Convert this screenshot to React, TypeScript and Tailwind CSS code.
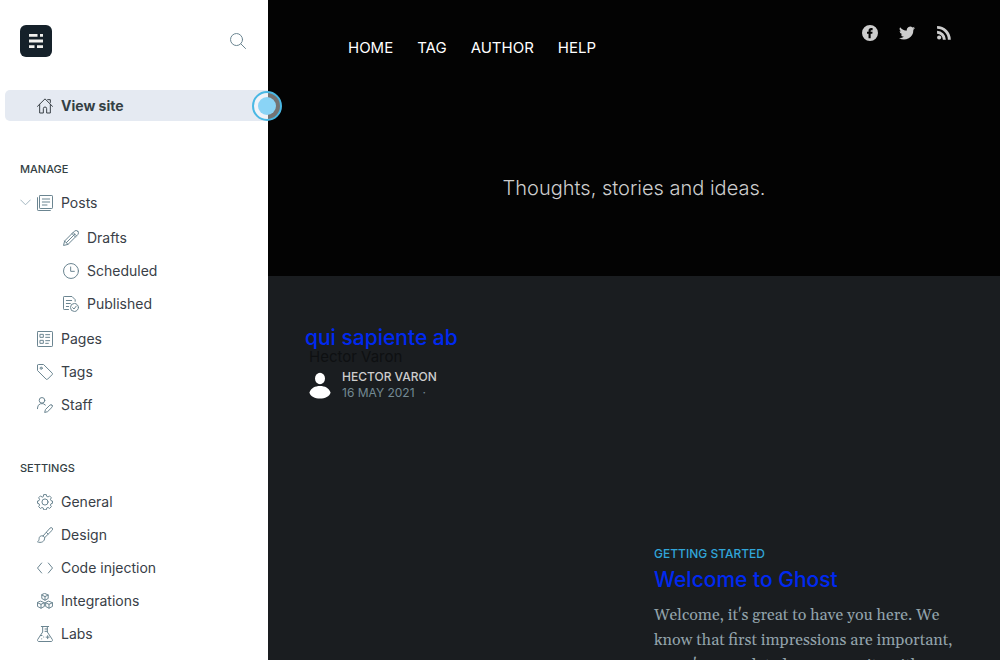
import type { ReactNode } from "react";

function Icon({ children, className = "size-4 text-[#6b8591]" }: { children: ReactNode; className?: string }) {
  return (
    <svg
      viewBox="0 0 24 24"
      fill="none"
      stroke="currentColor"
      strokeWidth="1.5"
      strokeLinecap="round"
      strokeLinejoin="round"
      aria-hidden="true"
      className={`shrink-0 ${className}`}
    >
      {children}
    </svg>
  );
}

const icons = {
  house: (
    <>
      <path d="M.75 12.5 12 1.3l11.25 11.200" />
      <path d="M4 9.500v13H9.500v-6.500a2.500 2.500 0 0 1 5 0v6.500H20V9.500" />
      <path d="M16 2.500h4v4.200" />
    </>
  ),
  posts: (
    <>
      <rect x="3.75" y=".75" width="19.5" height="19.5" rx="1" />
      <path d="M.75 4v18.25a1 1 0 0 0 1 1H20M8 6h11M8 10.5h11M8 15h7" />
    </>
  ),
  pencil: (
    <>
      <path d="M22.2 1.8a3.6 3.6 0 0 0-5.1 0L2.4 16.5.8 23.2l6.7-1.6L22.2 6.9a3.6 3.6 0 0 0 0-5.1Z" />
      <path d="m15.2 3.7 5.1 5.1M2.4 16.5l5.1 5.1M17.7 6.3 5 19M13.5 5.4l5.1 5.1" />
    </>
  ),
  clock: (
    <>
      <circle cx="12" cy="12" r="11.2" />
      <path d="M11.5 6v6.5H17" />
    </>
  ),
  published: (
    <>
      <path d="M8.25 20.25h-6.5a1 1 0 0 1-1-1V1.75a1 1 0 0 1 1-1H13.5l4.75 4.75V8M5 6.75h8M5 11.25h6M5 15.75h3.5" />
      <circle cx="17.2" cy="17.2" r="6" />
      <path d="m14.5 17.5 2 2 3.4-4.4" />
    </>
  ),
  pages: (
    <>
      <rect x=".75" y=".75" width="22.5" height="22.5" rx="1" />
      <path d="M5 5h4.5v4.5H5zM5 14h4.5v4.5H5zM13 5.5h6M13 9.5h6M13 14.5h6M13 18.5h4" />
    </>
  ),
  tag: (
    <>
      <path d="M.75 2v7.8l13 13a1.5 1.5 0 0 0 2.1 0l7-7a1.5 1.5 0 0 0 0-2.1L9.8.75H2A1.25 1.25 0 0 0 .75 2Z" />
      <circle cx="6.3" cy="6.3" r="1.6" />
    </>
  ),
  staff: (
    <>
      <circle cx="7.5" cy="5" r="4.2" />
      <path d="M.75 17.5v-1a6.75 6.75 0 0 1 11.8-4.5" />
      <path d="M22.5 12.2a2.3 2.3 0 0 0-3.2 0l-6.6 6.6-1.2 4.4 4.4-1.2 6.6-6.6a2.3 2.3 0 0 0 0-3.2Z" />
    </>
  ),
  gear: (
    <>
      <path d="M9.500 3.500 10 .9h4l.5 2.600 2.100.9 2.200-1.500 2.800 2.800-1.500 2.200.9 2.100 2.200.5v3.500l-2.200.6-.9 2.100 1.500 2.200-2.800 2.800-2.200-1.500-2.100.9-.5 2.600h-4l-.5-2.600-2.100-.9-2.200 1.500-2.800-2.800 1.500-2.200-.9-2.100L.8 14v-3.500L3 10l.9-2.100-1.500-2.200 2.800-2.800 2.200 1.500Z" />
      <circle cx="12" cy="12" r="4.6" />
    </>
  ),
  brush: (
    <>
      <path d="M9 13.500 19.600 1.600a2.200 2.200 0 0 1 3.200 3.200L11.500 16" />
      <path d="M8.400 13.200c-3-.5-5.200 1.200-5.200 4.200 0 2.200-.9 3.700-2.400 4.800 4.700 2.200 11.200.4 10.700-6.200Z" />
      <path d="m14 8 2.500 2.500" />
    </>
  ),
  code: <path d="M7 4.5.75 12 7 19.5M17 4.5l6.25 7.5L17 19.5" />,
  cubes: (
    <>
      <path d="m12 .8 4.8 2.2v5.2L12 10.8 7.2 8.2V3ZM7.2 3 12 5.4 16.800 3M12 5.400v5.400" />
      <path d="m6 12.4 5 2.2v5.6l-5 2.6-5.2-2.6v-5.6ZM.8 14.6 6 17l5-2.400M6 17v5.800" />
      <path d="m18 12.4 5.2 2.2v5.6L18 22.800l-5-2.600v-5.600ZM13 14.600l5 2.400 5.200-2.400M18 17v5.800" />
    </>
  ),
  flask: (
    <>
      <path d="M6.5.75h11M8.5.75V9L1 20.3c-.8 1.4 0 2.95 1.6 2.95h18.8c1.6 0 2.4-1.55 1.6-2.95L15.5 9V.75M12 4.5h3.5M12 8h3.5M5 14.3h2.500" />
      <path d="M16 14.500v4.500M13.700 16.700h4.600M7 19.300h.1M10 16.500h.1" />
    </>
  ),
};

function NavItem({ icon, label, nested = false }: { icon: ReactNode; label: string; nested?: boolean }) {
  return (
    <li>
      <a
        href="#"
        className={`flex h-[33px] items-center gap-2 text-sm text-[#394047] ${nested ? "pl-[63px]" : "pl-[37px]"}`}
      >
        <Icon>{icon}</Icon>
        {label}
      </a>
    </li>
  );
}

function Sidebar() {
  return (
    <aside className="relative w-[268px] shrink-0 bg-white">
      <div className="flex items-center justify-between pt-[25px] pr-[22px] pl-5">
        <a href="#" aria-label="Dashboard" className="grid size-8 place-items-center rounded-md bg-[#15212a]">
          <svg viewBox="0 0 14 14" className="size-3.5" aria-hidden="true">
            <path fill="#f1f1ee" d="M0 0h8.500v2.800H0zM11 0h3v2.800h-3zM0 5.600h14v2.800H0zM0 11.200h5.500V14H0zM8 11.200h6V14H8z" />
          </svg>
        </a>
        <button type="button" aria-label="Search">
          <Icon>
            <circle cx="9.8" cy="9.8" r="9" />
            <path d="m16.3 16.3 7 7" />
          </Icon>
        </button>
      </div>

      <a
        href="#"
        className="mt-[33px] ml-[5px] flex h-[31px] items-center gap-2 rounded-l-[5px] bg-[#e5eaf2] pl-8 text-sm font-bold text-[#343f44]"
      >
        <Icon className="size-4 text-[#394047]">{icons.house}</Icon>
        View site
      </a>
      <span
        aria-hidden="true"
        className="absolute top-[91px] -right-3.5 grid size-[30px] place-items-center rounded-full border-2 border-[#4ab8e4] bg-white/45"
      >
        <span className="size-[18px] rounded-full bg-[#8ad4f6]" />
      </span>

      <nav>
        <h2 className="mt-10 pl-5 text-[11px] leading-4 font-medium text-[#343f44] uppercase">Manage</h2>
        <ul className="mt-[9px]">
          <li>
            <div className="flex h-[33px] items-center pl-5 text-sm text-[#394047]">
              <button type="button" aria-label="Collapse posts" className="mr-1.5">
                <Icon className="size-[11px] text-[#9bb0bb]">
                  <path strokeWidth="2" d="m1.5 6.5 10.5 10.5L22.5 6.5" />
                </Icon>
              </button>
              <a href="#" className="flex items-center gap-2">
                <Icon>{icons.posts}</Icon>
                Posts
              </a>
            </div>
            <ul className="py-0.5">
              <NavItem nested icon={icons.pencil} label="Drafts" />
              <NavItem nested icon={icons.clock} label="Scheduled" />
              <NavItem nested icon={icons.published} label="Published" />
            </ul>
          </li>
          <NavItem icon={icons.pages} label="Pages" />
          <NavItem icon={icons.tag} label="Tags" />
          <NavItem icon={icons.staff} label="Staff" />
        </ul>

        <h2 className="mt-[39px] pl-5 text-[11px] leading-4 font-medium text-[#343f44] uppercase">Settings</h2>
        <ul className="mt-[9px]">
          <NavItem icon={icons.gear} label="General" />
          <NavItem icon={icons.brush} label="Design" />
          <NavItem icon={icons.code} label="Code injection" />
          <NavItem icon={icons.cubes} label="Integrations" />
          <NavItem icon={icons.flask} label="Labs" />
        </ul>
      </nav>
    </aside>
  );
}

function SiteHeader() {
  return (
    <header className="h-[276px] bg-[#030303]">
      <div className="flex justify-between pr-12 pl-20">
        <nav className="flex gap-6 pt-9 text-[15px] leading-6 text-white uppercase">
          <a href="#">Home</a>
          <a href="#">Tag</a>
          <a href="#">Author</a>
          <a href="#">Help</a>
        </nav>
        <div className="flex gap-[21px] pt-[25px] text-[#cdcdcd]">
          <a href="#" aria-label="Facebook">
            <svg viewBox="0 0 32 32" className="size-4" fill="currentColor" aria-hidden="true">
              <path d="M16 0a16 16 0 1 0 0 32 16 16 0 0 0 0-32Zm5.2 10.3h-2.4c-.9 0-1.5.5-1.5 1.4v2h3.8l-.5 3.7h-3.3v8.9h-4.2v-8.9H10v-3.7h3.1v-2.9c0-3.2 2.1-5 5-5h3.1v4.5Z" />
            </svg>
          </a>
          <a href="#" aria-label="Twitter">
            <svg viewBox="0 0 24 24" className="size-4" fill="currentColor" aria-hidden="true">
              <path d="M24 4.6a10 10 0 0 1-2.8.8 5 5 0 0 0 2.2-2.7 10 10 0 0 1-3.1 1.2 4.9 4.9 0 0 0-8.4 4.5A14 14 0 0 1 1.7 3.2a4.9 4.9 0 0 0 1.5 6.5A4.9 4.9 0 0 1 1 9.1a4.9 4.9 0 0 0 3.9 4.9 5 5 0 0 1-2.2.1 4.9 4.9 0 0 0 4.6 3.4A9.9 9.9 0 0 1 0 19.5a14 14 0 0 0 21.5-12.4A10 10 0 0 0 24 4.6Z" />
            </svg>
          </a>
          <a href="#" aria-label="RSS">
            <svg viewBox="0 0 24 24" className="size-4" fill="currentColor" aria-hidden="true">
              <circle cx="4.7" cy="18.7" r="3.1" />
              <path d="M1.6 8.8v4.5A8.7 8.7 0 0 1 10.3 22h4.5A13.2 13.2 0 0 0 1.6 8.8Z" />
              <path d="M1.6 1.4v4.4A16.2 16.2 0 0 1 17.8 22h4.4A20.6 20.6 0 0 0 1.6 1.4Z" />
            </svg>
          </a>
        </div>
      </div>
      <p className="mt-28 text-center text-xl leading-8 font-light text-[#cdcdcd]">
        Thoughts, stories and ideas.
      </p>
    </header>
  );
}

function Posts() {
  return (
    <main className="grid grid-cols-[349px_1fr] pl-[37px]">
      <article className="pt-[46px]">
        <h2 className="text-[21px] leading-8 font-medium text-[#0029f0]">
          <a href="#">qui sapiente ab</a>
        </h2>
        <div className="relative mt-[15px] flex items-center gap-2.5 pl-[3px]">
          <span className="absolute -top-6 left-1 text-[15px] leading-6 text-[#0e1012]">Hector Varon</span>
          <svg viewBox="0 0 24 28" className="h-7 w-6" fill="#fff" aria-hidden="true">
            <ellipse cx="12" cy="7.5" rx="5" ry="5.7" />
            <path d="M1.4 21.5C3.2 17 7 15 12 15s8.8 2 10.6 6.5C21.5 25.5 17 27.5 12 27.5s-9.500-2-10.600-6Z" />
          </svg>
          <div className="text-xs leading-4 uppercase">
            <a href="#" className="block font-medium text-[#cdcdcd]">Hector Varon</a>
            <p className="text-[#738a94]">
              <time dateTime="2021-05-16">16 May 2021</time>
              <span className="ml-2">·</span>
            </p>
          </div>
        </div>
      </article>

      <article className="pt-[270px] pr-10">
        <p className="text-xs leading-4 font-medium text-[#31a5d8] uppercase">Getting started</p>
        <h2 className="mt-0.5 text-[21px] leading-8 font-medium text-[#0029f0]">
          <a href="#">Welcome to Ghost</a>
        </h2>
        <p className="mt-[7px] font-[Gelasio,Georgia,'Noto_Serif','Liberation_Serif',serif] text-base leading-[25px] text-[#92a3ab]">
          Welcome, it's great to have you here. We know that first impressions are important, so we've populated your
          new site with
        </p>
      </article>
    </main>
  );
}

export default function App() {
  return (
    <div className="flex h-screen overflow-hidden font-[Inter,sans-serif]">
      <Sidebar />
      <div className="min-w-0 flex-1 bg-[#1a1d20]">
        <SiteHeader />
        <Posts />
      </div>
    </div>
  );
}
